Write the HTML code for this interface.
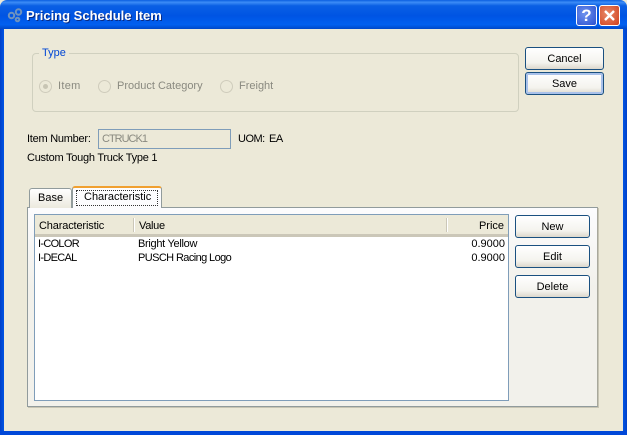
<!DOCTYPE html>
<html><head><meta charset="utf-8"><style>
html,body{margin:0;padding:0}
body{width:627px;height:435px;overflow:hidden;background:#ece9d8;position:relative;font:11px/13px "Liberation Sans",sans-serif;color:#000}
.a{position:absolute}
.t{position:absolute;white-space:nowrap}
.d{color:#8a8a80}
.b{position:absolute;box-sizing:border-box;border:1px solid #1a5080;border-radius:3px;background:linear-gradient(#fff,#f4f3ee 70%,#dcd8cc);text-align:center;line-height:22px;height:23px}
.r{position:absolute;box-sizing:border-box;width:13px;height:13px;border:1px solid #cfccbc;border-radius:50%;background:#ece9d8}
</style></head><body>
<div class="a" style="left:0;top:0;width:627px;height:29px;border-radius:7px 7px 0 0;background:linear-gradient(#0a5ee0 0,#3c8cf6 8%,#0a5fe4 20%,#0054e3 55%,#0160f0 85%,#0048c8 100%)"></div>
<div class="a" style="left:0;top:29px;width:4px;height:406px;background:linear-gradient(90deg,#0040c8,#0055e5)"></div>
<div class="a" style="left:623px;top:29px;width:4px;height:406px;background:linear-gradient(90deg,#0055e5,#0040c8)"></div>
<div class="a" style="left:0;top:431px;width:627px;height:4px;background:#0048d8"></div>
<svg class="a" style="left:7px;top:7px" width="16" height="16" viewBox="0 0 16 16" fill="none" stroke="#6f93bd" stroke-width="2"><circle cx="4.5" cy="8.5" r="2.7"/><circle cx="11.5" cy="5" r="2.7"/><circle cx="10.5" cy="12.5" r="1.8"/></svg>
<div class="t" style="left:26px;top:8px;font:bold 13px/16px 'Liberation Sans',sans-serif;color:#fff;text-shadow:1px 1px 0 #0a2a80">Pricing Schedule Item</div>
<div class="a" style="left:576px;top:5px;width:21px;height:21px;box-sizing:border-box;border:1px solid #fff;border-radius:3px;background:radial-gradient(circle at 40% 40%,#6f93ee,#2a50d0);color:#fff;font:bold 17px/19px 'Liberation Sans',sans-serif;text-align:center">?</div>
<div class="a" style="left:599px;top:5px;width:21px;height:21px;box-sizing:border-box;border:1px solid #fff;border-radius:3px;background:radial-gradient(circle at 40% 40%,#e88a6a,#d0401c)"><svg width="19" height="19" style="display:block"><path d="M5 5 14 14M14 5 5 14" stroke="#fff" stroke-width="2.4"/></svg></div>

<div class="a" style="left:32px;top:53px;width:487px;height:59px;box-sizing:border-box;border:1px solid #d0d0bf;border-radius:4px"></div>
<div class="t" style="left:39px;top:47px;padding:0 3px;background:#ece9d8;color:#0046d5">Type</div>
<div class="r" style="left:39px;top:80px"></div><div class="a" style="left:43px;top:84px;width:5px;height:5px;border-radius:50%;background:#c8c5b4"></div>
<div class="t d" style="left:58px;top:80px;letter-spacing:.3px">Item</div>
<div class="r" style="left:98px;top:80px"></div>
<div class="t d" style="left:117px;top:80px">Product Category</div>
<div class="r" style="left:220px;top:80px"></div>
<div class="t d" style="left:239px;top:80px">Freight</div>

<div class="b" style="left:525px;top:47px;width:79px">Cancel</div>
<div class="b" style="left:525px;top:72px;width:79px;height:23px;box-shadow:inset 0 0 0 2px #a9c1ea">Save</div>

<div class="t" style="left:27px;top:133px;letter-spacing:-.25px">Item Number:</div>
<div class="a" style="left:98px;top:129px;width:133px;height:20px;box-sizing:border-box;border:1px solid #7f9db9;background:#ece9d8"></div>
<div class="t d" style="left:102px;top:133px;letter-spacing:-1px">CTRUCK1</div>
<div class="t" style="left:238px;top:133px;letter-spacing:-.5px">UOM:</div>
<div class="t" style="left:269px;top:133px;letter-spacing:-.5px">EA</div>
<div class="t" style="left:27px;top:152px;letter-spacing:-.25px">Custom Tough Truck Type 1</div>

<div class="a" style="left:27px;top:207px;width:571px;height:200px;box-sizing:border-box;border:1px solid #919b9c;border-right-color:#a8a89c;border-bottom-color:#919b9c;background:linear-gradient(#fcfcfe,#f2f1eb 40%);box-shadow:1px 1px 0 #c8c5b4"></div>
<div class="a" style="left:29px;top:188px;width:43px;height:20px;box-sizing:border-box;border:1px solid #919b9c;border-bottom:0;border-radius:3px 3px 0 0;background:linear-gradient(#fff,#ece9de)"></div>
<div class="t" style="left:38px;top:192px">Base</div>
<div class="a" style="left:72px;top:186px;width:90px;height:22px;box-sizing:border-box;border:1px solid #919b9c;border-top:2px solid #f0a030;border-bottom:0;border-radius:3px 3px 0 0;background:#fcfcfe"></div>
<div class="a" style="left:76px;top:190px;width:82px;height:16px;box-sizing:border-box;border:1px dotted #333"></div>
<div class="t" style="left:84px;top:191px">Characteristic</div>

<div class="a" style="left:34px;top:214px;width:475px;height:187px;box-sizing:border-box;border:1px solid #7f9db9;background:#fff"></div>
<div class="a" style="left:35px;top:215px;width:473px;height:19px;background:#ece9d8"></div>
<div class="a" style="left:35px;top:234px;width:473px;height:3px;background:#cbc7b8"></div>
<div class="a" style="left:133px;top:218px;width:1px;height:14px;background:#cbc7b8"></div>
<div class="a" style="left:134px;top:218px;width:1px;height:14px;background:#fff"></div>
<div class="a" style="left:446px;top:218px;width:1px;height:14px;background:#cbc7b8"></div>
<div class="a" style="left:447px;top:218px;width:1px;height:14px;background:#fff"></div>
<div class="t" style="left:39px;top:220px;letter-spacing:-.15px">Characteristic</div>
<div class="t" style="left:139px;top:220px;letter-spacing:-.3px">Value</div>
<div class="t" style="right:123px;top:220px">Price</div>
<div class="t" style="left:38px;top:238px;letter-spacing:-.7px">I-COLOR</div>
<div class="t" style="left:138px;top:238px;letter-spacing:-.3px">Bright Yellow</div>
<div class="t" style="right:122px;top:238px">0.9000</div>
<div class="t" style="left:38px;top:252px;letter-spacing:-.7px">I-DECAL</div>
<div class="t" style="left:138px;top:252px;letter-spacing:-.6px">PUSCH Racing Logo</div>
<div class="t" style="right:122px;top:252px">0.9000</div>

<div class="b" style="left:515px;top:215px;width:75px">New</div>
<div class="b" style="left:515px;top:245px;width:75px">Edit</div>
<div class="b" style="left:515px;top:275px;width:75px">Delete</div>
</body></html>
